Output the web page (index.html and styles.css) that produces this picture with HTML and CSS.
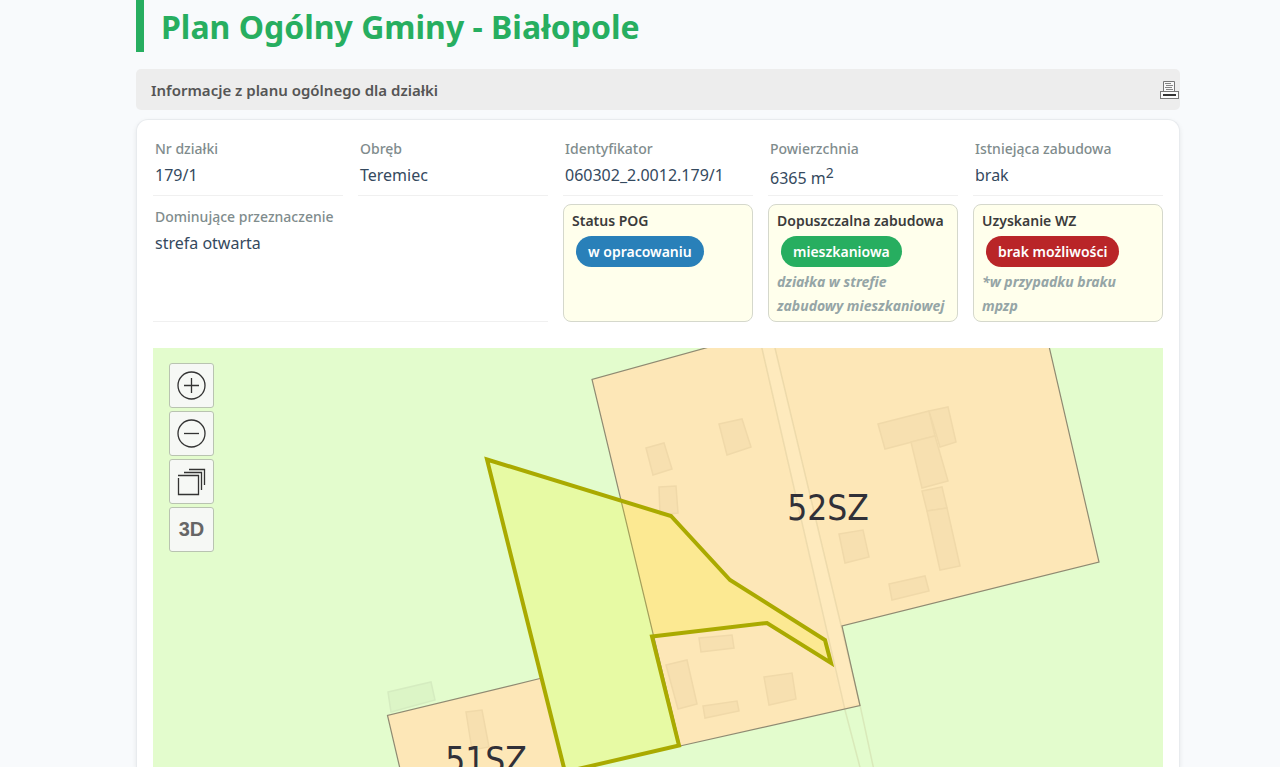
FILE: index.html
```html
<!DOCTYPE html>
<html lang="pl">
<head>
<meta charset="utf-8">
<meta name="viewport" content="width=device-width, initial-scale=1">
<title>Plan Ogólny Gminy - Białopole</title>
<link rel="stylesheet" href="styles.css">
</head>
<body>
<main class="page">
  <h1 class="page-title">Plan Ogólny Gminy - Białopole</h1>

  <header class="section-bar">
    <h2 class="section-title">Informacje z planu ogólnego dla działki</h2>
    <button class="print-button" type="button" aria-label="Drukuj">
      <svg width="20" height="20" viewBox="0 0 20 20" fill="none" stroke="#777" aria-hidden="true">
        <path d="M3.500 11.500V1.500H14.500V11.500" fill="#f8f8f8"/>
        <path d="M5 3.500H11M6 5.500H13M5 7.500H12M6 9.500H13" stroke="#858585"/>
        <rect x="0.500" y="11.500" width="18" height="7" fill="#fafafa"/>
        <path d="M3 15H16" stroke="#333" stroke-width="2"/>
      </svg>
    </button>
  </header>

  <section class="card">
    <dl class="facts">
      <div class="fact"><dt>Nr działki</dt><dd>179/1</dd></div>
      <div class="fact"><dt>Obręb</dt><dd>Teremiec</dd></div>
      <div class="fact"><dt>Identyfikator</dt><dd>060302_2.0012.179/1</dd></div>
      <div class="fact"><dt>Powierzchnia</dt><dd class="area">6365 m<sup>2</sup></dd></div>
      <div class="fact"><dt>Istniejąca zabudowa</dt><dd>brak</dd></div>
      <div class="fact fact-wide"><dt>Dominujące przeznaczenie</dt><dd>strefa otwarta</dd></div>
      <div class="status"><dt>Status POG</dt><dd><span class="pill pill-blue">w opracowaniu</span></dd></div>
      <div class="status"><dt>Dopuszczalna zabudowa</dt><dd><span class="pill pill-green">mieszkaniowa</span><em class="note">działka w strefie zabudowy mieszkaniowej</em></dd></div>
      <div class="status"><dt>Uzyskanie WZ</dt><dd><span class="pill pill-red">brak możliwości</span><em class="note">*w przypadku braku mpzp</em></dd></div>
    </dl>

    <div class="map">
      <svg class="map-canvas" viewBox="153 348 1010 419" preserveAspectRatio="xMinYMin slice" role="img" aria-label="Mapa planu ogólnego">
        <g class="zone">
          <path d="M592 379.500L720 344H1048.500L1099 562L842 626L860 705.500L680 746Z"/>
          <path d="M387.500 715.500L540 678.500L567 790H405Z"/>
        </g>
        <path class="road" d="M761 344L843 707L860 703L774 344Z"/>
        <path class="road-edge" d="M761 344L845 710L862 775M774 344L860 705L875 775"/>
        <g class="building">
          <path d="M719 424L742 419L751 447L727 455Z"/>
          <path d="M646 448L664 443L672 469L653 475Z"/>
          <path d="M659 487L676 486L678 513L660 515Z"/>
          <path d="M878 424L929 411L935 436L885 449Z"/>
          <path d="M929 411L948 407L956 442L940 447Z"/>
          <path d="M911 442L935 436L948 481L922 488Z"/>
          <path d="M922 491L942 487L947 508L927 511Z"/>
          <path d="M927 511L947 508L960 566L940 570Z"/>
          <path d="M839 534L863 530L869 557L845 563Z"/>
          <path d="M889 584L925 576L929 591L892 600Z"/>
          <path d="M699 638L732 635L734 648L701 652Z"/>
          <path d="M666 665L687 660L697 704L678 709Z"/>
          <path d="M703 706L737 701L739 711L705 718Z"/>
          <path d="M764 677L792 673L796 699L769 705Z"/>
          <path d="M466 712L482 710L489 747L472 750Z"/>
        </g>
        <path class="building-green" d="M388 692L431 682L435 700L391 712Z"/>
        <g class="zone-edge">
          <path d="M680 746L592 379.500L720 344M1048.500 344L1099 562L842 626L860 705.500L680 746"/>
          <path d="M405 790L387.500 715.500L540 678.500"/>
        </g>
        <path class="parcel" d="M487 459.500L671 516L730 580L825 640L831 663L767 623L652 636.500L679 745.500L565 772Z"/>
        <text class="map-label" x="828" y="520">52SZ</text>
        <text class="map-label" x="486" y="772">51SZ</text>
      </svg>

      <div class="map-tools">
        <button type="button" aria-label="Przybliż">
          <svg width="31" height="31" viewBox="0 0 31 31" aria-hidden="true"><circle cx="15.500" cy="15.500" r="13.500"/><path d="M8 15.500H23M15.500 8V23"/></svg>
        </button>
        <button type="button" aria-label="Oddal">
          <svg width="31" height="31" viewBox="0 0 31 31" aria-hidden="true"><circle cx="15.500" cy="15.500" r="13.500"/><path d="M8 15.500H23"/></svg>
        </button>
        <button type="button" aria-label="Warstwy">
          <svg width="31" height="31" viewBox="0 0 31 31" aria-hidden="true"><path d="M2.500 12V28.500H22.500V9M2 9.500H23M8 6.500H25.500V24M13 3.500H28.500V19"/></svg>
        </button>
        <button type="button">3D</button>
      </div>
    </div>
  </section>
</main>
</body>
</html>
```

FILE: styles.css
```css
* {
  box-sizing: border-box;
}

body {
  margin: 0;
  background: #f8fafc;
  color: #34495e;
  font: 16px/26px "Noto Sans", "Open Sans", sans-serif;
}

.page {
  display: flex;
  flex-direction: column;
  height: 100vh;
  padding: 0 100px 0 136px;
  overflow: hidden;
}

.page-title {
  margin: 0 0 17px;
  padding: 2px 0 0 17px;
  border-left: 8px solid #27ae60;
  color: #27ae60;
  font-size: 32px;
  font-weight: 700;
  line-height: 50px;
}

.section-bar {
  display: flex;
  align-items: center;
  justify-content: space-between;
  height: 41px;
  flex: none;
  margin-bottom: 9px;
  padding-left: 15px;
  border-radius: 5px;
  background: #ededed;
}

.section-title {
  margin: 0;
  color: #555;
  font-size: 15px;
  font-weight: 600;
}

.print-button {
  display: flex;
  padding: 0;
  border: 0;
  background: none;
}

.card {
  display: flex;
  flex: 1;
  flex-direction: column;
  min-height: 0;
  padding: 16px 16px 0;
  border: 1px solid #e8ebee;
  border-bottom: 0;
  border-radius: 12px 12px 0 0;
  background: #fff;
  box-shadow: 0 2px 5px rgba(0, 0, 0, 0.08);
}

.facts {
  display: grid;
  grid-template-columns: repeat(5, minmax(0, 1fr));
  gap: 8px 15px;
  margin: 0 0 26px;
}

.facts dd {
  margin: 0;
}

.fact {
  padding: 0 2px 7px;
  border-bottom: 1px solid #f0f0f0;
}

.fact dt {
  color: #7f8c8d;
  font-size: 14px;
  font-weight: 500;
}

.fact .area {
  padding-top: 6px;
  line-height: 20px;
}

.fact sup {
  font-size: 14px;
  line-height: 0;
}

.fact-wide {
  grid-column: span 2;
}

.status {
  padding: 4px 8px 3px;
  border: 1px solid #d5d8cc;
  border-radius: 8px;
  background: #ffffec;
}

.status dt {
  color: #3b3b3b;
  font-size: 14px;
  font-weight: 600;
  line-height: 24px;
}

.pill {
  display: block;
  width: fit-content;
  margin: 3px 4px;
  padding: 0 12px;
  border-radius: 16px;
  color: #fff;
  font-size: 14px;
  font-weight: 600;
  line-height: 31px;
}

.pill-blue {
  background: #2980b9;
}

.pill-green {
  background: #27ae60;
}

.pill-red {
  background: #b92528;
}

.note {
  display: block;
  color: #95a5a6;
  font-size: 14px;
  font-weight: 700;
  line-height: 24px;
}

.map {
  position: relative;
  flex: 1;
  min-height: 0;
  background: #e3fccd;
}

.map-canvas {
  display: block;
  width: 100%;
  height: 100%;
}

.zone {
  fill: #fde7b7;
}

.zone-edge {
  fill: none;
  stroke: #8f8a72;
  stroke-width: 1.2;
}

.road {
  fill: #fff2c8;
  fill-opacity: 0.35;
}

.road-edge {
  fill: none;
  stroke: #b4a878;
  stroke-opacity: 0.22;
  stroke-width: 1.5;
}

.building {
  fill: #f7e0b0;
  stroke: #f0d9a9;
  stroke-width: 1.5;
}

.building-green {
  fill: #dcf5c6;
  stroke: #d5ecc0;
  stroke-width: 1.5;
}

.parcel {
  fill: #fbf400;
  fill-opacity: 0.2;
  stroke: #aaaa00;
  stroke-width: 4;
}

.map-label {
  fill: #303038;
  font-family: "DejaVu Sans Condensed", "DejaVu Sans", sans-serif;
  font-size: 35px;
  text-anchor: middle;
}

.map-tools {
  position: absolute;
  top: 15px;
  left: 16px;
  display: grid;
  gap: 3px;
}

.map-tools button {
  display: flex;
  align-items: center;
  justify-content: center;
  width: 45px;
  height: 45px;
  padding: 0;
  border: 1px solid #b9c3b1;
  border-radius: 3px;
  background: #f6f8f5;
  color: #666;
  font: 700 20px "Liberation Sans", sans-serif;
}

.map-tools svg {
  fill: none;
  stroke: #333;
  stroke-width: 1.3;
}
```
